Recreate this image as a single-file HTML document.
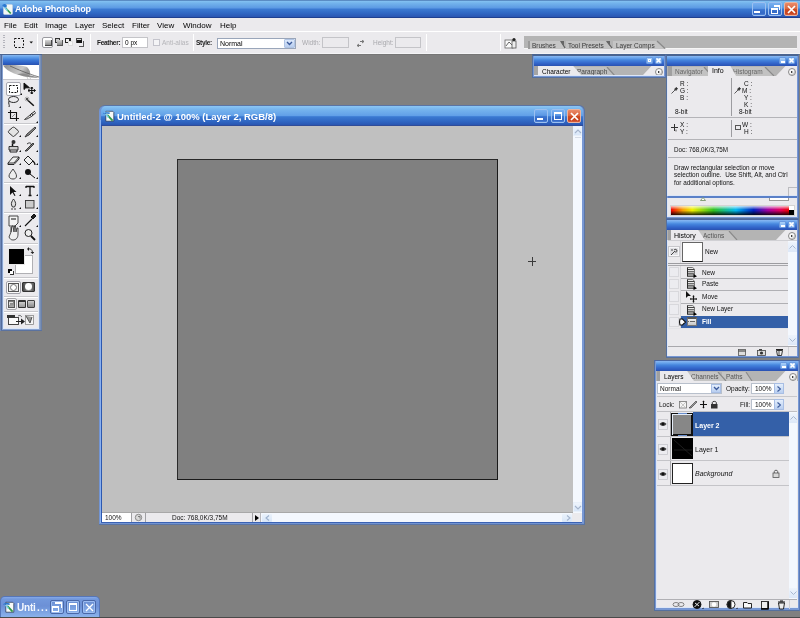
<!DOCTYPE html>
<html><head><meta charset="utf-8">
<style>
*{margin:0;padding:0;box-sizing:border-box}
html,body{width:800px;height:618px;overflow:hidden;background:#808080;font-family:"Liberation Sans",sans-serif;position:relative}
body{will-change:transform}
.a{position:absolute}
.t{position:absolute;white-space:nowrap;line-height:1;font-family:"Liberation Sans",sans-serif}
.m{font-size:8px;color:#000;top:21.5px}
.o{font-size:7px;color:#000}
.g{color:#a6a6a6}
.xb{position:absolute;width:14px;height:14px;border:1px solid #9cc0f0;border-radius:2px;background:linear-gradient(#78b0f0,#5c98e4 45%,#3a74d0 55%,#3468c4 85%,#4a80d8)}
.xc{background:linear-gradient(#ea8a68,#dc6a44 45%,#cc4a22 55%,#c84420 85%,#d86040);border-color:#eab4a0}
.inp{position:absolute;background:#fff;border:1px solid #a9b3c2}
.sep{position:absolute;width:1px;background:#b8b8bc;border-right:1px solid #fff}
</style></head><body>

<!-- ============ APP TITLE BAR ============ -->
<div class="a" style="left:0;top:0;width:800px;height:18px;background:linear-gradient(#5a8cc4 0px,#5a8cc4 1px,#84c2f2 1px,#74b4ec 3px,#5e9ce4 7.5px,#4c8adc 8.5px,#3a78d0 9.5px,#3068c4 13px,#2a58b4 16.5px,#1e4090 17px,#1e4090 18px)"></div>
<svg class="a" style="left:2px;top:3px" width="11" height="12" viewBox="0 0 11 12">
<rect x="1.5" y="1.5" width="9" height="10" rx="1" fill="#f4f8f4" stroke="#c8d4e0" stroke-width=".6"/>
<path d="M3.5 5 L8.8 10.5" stroke="#2f9a48" stroke-width="1.8"/>
<path d="M2 4 L5.5 7.5" stroke="#7fd0f0" stroke-width="1.4"/>
<path d="M0.3 2.5 C1 0.8 3.5 0.5 4.8 2 L4.6 4.5 C3 4.5 1 4 0.3 2.5z" fill="#2a78d0"/>
</svg>
<div class="t" style="left:15px;top:5px;font-size:9px;font-weight:bold;color:#fff;letter-spacing:-0.1px">Adobe Photoshop</div>
<div class="xb" style="left:752px;top:2px"><div class="a" style="left:1px;top:8px;width:6px;height:2px;background:#fff"></div></div>
<div class="xb" style="left:768px;top:2px"><div class="a" style="left:5px;top:2px;width:6px;height:5px;border:1px solid #fff;border-top-width:2px;border-left:0;border-bottom:0"></div><div class="a" style="left:2px;top:5px;width:7px;height:6px;border:1px solid #fff;border-top-width:2px"></div></div>
<div class="xb xc" style="left:784px;top:2px"><svg class="a" style="left:2px;top:2px" width="9" height="9"><path d="M1 1L8 8M8 1L1 8" stroke="#fff" stroke-width="1.7"/></svg></div>

<!-- ============ MENU BAR ============ -->
<div class="a" style="left:0;top:18px;width:800px;height:13px;background:#ebeaed"></div>
<div class="t m" style="left:4px">File</div>
<div class="t m" style="left:24px">Edit</div>
<div class="t m" style="left:45px">Image</div>
<div class="t m" style="left:75px">Layer</div>
<div class="t m" style="left:102px">Select</div>
<div class="t m" style="left:132px">Filter</div>
<div class="t m" style="left:157px">View</div>
<div class="t m" style="left:183px">Window</div>
<div class="t m" style="left:220px">Help</div>
<div class="a" style="left:0;top:32px;width:800px;height:1px;background:#d4d2d8"></div>
<div class="a" style="left:0;top:31px;width:800px;height:1px;background:#fff"></div>

<!-- ============ OPTIONS BAR ============ -->
<div class="a" style="left:0;top:32px;width:800px;height:22px;background:#ebeaed"></div>
<div class="a" style="left:0;top:53px;width:800px;height:1px;background:#f4f4f6"></div>
<div class="a" style="left:0;top:54px;width:800px;height:1px;background:#767676"></div>
<!-- grip -->
<div class="a" style="left:3px;top:35px;width:2px;height:15px;background:repeating-linear-gradient(#b4b4bc 0 1px,transparent 1px 2.5px)"></div>
<!-- marquee icon -->
<svg class="a" style="left:13px;top:37px" width="12" height="12"><rect x="1.5" y="1.5" width="9" height="9" fill="none" stroke="#111" stroke-width="1" stroke-dasharray="2 1.5"/></svg>
<svg class="a" style="left:29px;top:41px" width="5" height="3"><path d="M0.5 0.5H4L2.2 2.5z" fill="#111"/></svg>
<div class="sep" style="left:37px;top:34px;height:17px"></div>
<!-- selection mode buttons -->
<div class="a" style="left:42px;top:37px;width:11px;height:11px;background:#fff;border:1px solid #9a9aa0;border-radius:2px"></div>
<div class="a" style="left:45px;top:40px;width:7px;height:6px;background:linear-gradient(#d8d8d8,#8c8c8c);border-right:1px solid #444;border-bottom:1px solid #444"></div>
<div class="a" style="left:55px;top:38px;width:5px;height:5px;border:1px solid #333;background:#ccc"></div>
<div class="a" style="left:57px;top:40px;width:6px;height:6px;background:linear-gradient(#d0d0d0,#8a8a8a);border-right:1px solid #555;border-bottom:1px solid #555"></div>
<div class="a" style="left:65px;top:38px;width:6px;height:5px;border:1px solid #222;border-right-width:2px;background:#eee"></div>
<div class="a" style="left:68px;top:41px;width:5px;height:5px;background:#f6f6f6;border:1px solid #ddd"></div>
<div class="a" style="left:76px;top:38px;width:6px;height:5px;border:1px solid #444;background:#ddd"></div>
<div class="a" style="left:77px;top:40px;width:5px;height:3px;background:#111"></div>
<div class="a" style="left:79px;top:41px;width:5px;height:6px;border:1px solid #555;border-left:0;border-top:0"></div>
<div class="sep" style="left:90px;top:34px;height:17px"></div>
<div class="t o" style="left:97px;top:40px;font-size:6.5px;font-weight:bold;color:#222;letter-spacing:-0.3px">Feather:</div>
<div class="inp" style="left:122px;top:37px;width:26px;height:11px;border-color:#c4c4c8"></div>
<div class="t o" style="left:125px;top:40px;font-size:6.5px">0 px</div>
<div class="a" style="left:153px;top:39px;width:7px;height:7px;border:1px solid #c4c4cc;background:#f4f4f6"></div>
<div class="t o g" style="left:162px;top:40px;font-size:6.5px;color:#b4b4b8">Anti-alias</div>
<div class="sep" style="left:193px;top:34px;height:17px"></div>
<div class="t o" style="left:196px;top:40px;font-size:6.5px;font-weight:bold;color:#222;letter-spacing:-0.3px">Style:</div>
<div class="inp" style="left:217px;top:38px;width:79px;height:11px;border-color:#9aa6ba"></div>
<div class="t o" style="left:220px;top:40px">Normal</div>
<div class="a" style="left:284px;top:39px;width:11px;height:9px;background:linear-gradient(#dce8fa,#b8cdee);border:1px solid #b0c4e4;border-radius:1px"></div>
<svg class="a" style="left:286px;top:41px" width="7" height="5"><path d="M1 1L3.5 3.5L6 1" stroke="#3b5a9a" stroke-width="1.4" fill="none"/></svg>
<div class="t o g" style="left:302px;top:40px;font-size:6.5px;color:#a8a8ac">Width:</div>
<div class="inp" style="left:322px;top:37px;width:27px;height:11px;background:#ebeaed;border-color:#c4c4c8"></div>
<svg class="a" style="left:356px;top:40px" width="9" height="7"><path d="M4 1.5H8M6 0L8 1.5L6 3M5 5.5H1M3 4L1 5.5L3 7" stroke="#777" stroke-width="1" fill="none"/></svg>
<div class="t o g" style="left:373px;top:40px;font-size:6.5px;color:#a8a8ac">Height:</div>
<div class="inp" style="left:395px;top:37px;width:26px;height:11px;background:#ebeaed;border-color:#c4c4c8"></div>
<div class="sep" style="left:426px;top:34px;height:17px"></div>
<div class="sep" style="left:500px;top:34px;height:17px"></div>
<!-- palette well icon -->
<svg class="a" style="left:504px;top:37px" width="14" height="12"><rect x="1" y="3" width="8" height="8" fill="#fafafa" stroke="#666" stroke-width=".8"/><path d="M2 9L5 5L8 8" stroke="#444" fill="none" stroke-width=".8"/><rect x="8" y="4" width="4" height="7" fill="#eee" stroke="#555" stroke-width=".8"/><circle cx="10" cy="2.5" r="1.6" fill="#222"/></svg>
<!-- palette well -->
<div class="a" style="left:524px;top:36px;width:273px;height:13px;background:#b4b4b4;border-bottom:1px solid #f6f6f6"></div>
<svg class="a" style="left:524px;top:36px" width="150" height="13" viewBox="0 0 150 13">
<rect x="4" y="5" width="2" height="8" fill="#9a9a9a"/>
<path d="M89 5H133L142 13H89z" fill="#c4c4c4"/><path d="M133 5L141 12.5" stroke="#8a8a8a" stroke-width="1.3"/>
<path d="M42 5H82L89 13H42z" fill="#c2c2c2"/><path d="M83 5.5L88 12" stroke="#5a5a5a" stroke-width="1.2"/><path d="M82 5H86V10z" fill="#666"/>
<path d="M6 5H36L42 13H6z" fill="#c6c6c6"/><path d="M37 5.5L41 12" stroke="#5a5a5a" stroke-width="1.2"/><path d="M36 5H40V10z" fill="#666"/>
</svg>
<div class="t" style="left:532px;top:43px;font-size:6.5px;color:#3a3a3a">Brushes</div>
<div class="t" style="left:568px;top:43px;font-size:6.5px;color:#3a3a3a">Tool Presets</div>
<div class="t" style="left:616px;top:43px;font-size:6.5px;color:#3a3a3a">Layer Comps</div>

<!-- ============ TOOLBOX ============ -->
<div class="a" style="left:0;top:54px;width:42px;height:277px;background:linear-gradient(90deg,#6f88b8 0 1px,#526c9c 1px 2px,#88a2d0 2px 39px,#8aa0c8 39px 40px,#7890b8 40px 41px,#6a80a8 41px 42px)"></div>
<div class="a" style="left:0;top:54px;width:42px;height:1px;background:#4a6490"></div>
<div class="a" style="left:1px;top:330px;width:41px;height:1px;background:#5a72a0"></div>
<div class="a" style="left:3px;top:65px;width:36px;height:264px;background:#dde8f8"></div>
<div class="a" style="left:3px;top:55px;width:36px;height:10px;background:linear-gradient(#8ab8f0 0px,#62a0ea 2px,#3c7ad8 5px,#2d60c4 8px,#2a52b0 10px)"></div>
<div class="a" style="left:4px;top:65px;width:34px;height:263px;background:#ebeaed"></div>
<div class="a" style="left:3px;top:65px;width:36px;height:15px;background:#fff;border-bottom:1px solid #c8c8cc"></div>
<svg class="a" style="left:3px;top:65px" width="36" height="15" viewBox="0 0 36 15">
<defs><linearGradient id="fth" x1="0" y1="0" x2="1" y2=".3"><stop offset="0" stop-color="#8a8a8a"/><stop offset=".45" stop-color="#b4b4b4"/><stop offset=".75" stop-color="#c8c8c8"/><stop offset="1" stop-color="#9a9a9a"/></linearGradient></defs>
<path d="M0 .5 C6 -.3 18 0 24 2 C26 4 27.5 7 27 9.5 C22 11 16 10.5 11 8.5 C6 6.5 2 3.5 0 .5z" fill="url(#fth)"/>
<path d="M14 9 C19 11.5 25 12.5 36 12.8 C30 11 25 10 20 8.5z" fill="#8c8c8c"/>
<path d="M24 3 C26 5 28 8 27 10 L25 9z" fill="#9c9c9c"/>
<path d="M7 1 C15 4.5 24 8.5 36 12" stroke="#5a5a5a" stroke-width=".8" fill="none"/>
<path d="M24 12 L25 14 M27 12.5 L27.5 14" stroke="#aaa" stroke-width=".6"/>
</svg>
<!-- separators -->
<div class="a" style="left:4px;top:123px;width:34px;height:1px;background:#c8c8cc;border-bottom:1px solid #fff;height:2px"></div>
<div class="a" style="left:4px;top:182px;width:34px;height:2px;background:#c8c8cc;border-bottom:1px solid #fff"></div>
<div class="a" style="left:4px;top:212px;width:34px;height:2px;background:#c8c8cc;border-bottom:1px solid #fff"></div>
<div class="a" style="left:4px;top:243px;width:34px;height:2px;background:#c8c8cc;border-bottom:1px solid #fff"></div>
<div class="a" style="left:4px;top:277px;width:34px;height:2px;background:#c8c8cc;border-bottom:1px solid #fff"></div>
<div class="a" style="left:4px;top:296px;width:34px;height:2px;background:#c8c8cc;border-bottom:1px solid #fff"></div>
<div class="a" style="left:4px;top:311px;width:34px;height:2px;background:#c8c8cc;border-bottom:1px solid #fff"></div>

<svg class="a" style="left:3px;top:80px" width="36" height="250" viewBox="0 0 36 250">
<g fill="none" stroke="#111" stroke-width="1">
<!-- marquee selected button -->
<rect x="3.5" y="2.5" width="14" height="13" rx="1.5" fill="#fff" stroke="#a8a8b0"/>
<rect x="6.5" y="5.5" width="8" height="7" stroke-dasharray="2 1.2"/>
<!-- move -->
<path d="M21 3 L21 9.5 L22.8 7.8 L26.5 7.8z" fill="#111"/>
<path d="M25.5 10.5H32M28.75 7.5V13.5" stroke-width="1"/>
<path d="M25 10.5l1.2-1.1v2.2zM32.5 10.5l-1.2-1.1v2.2zM28.75 7l-1.1 1.2h2.2zM28.75 14l-1.1-1.2h2.2z" fill="#111"/>
<!-- lasso -->
<ellipse cx="10.5" cy="19.5" rx="5" ry="3" stroke-width=".9"/>
<path d="M6 21 C5 24 7 25 6 27" stroke-width=".9"/>
<!-- wand -->
<path d="M24.5 20L30.8 25.8" stroke-width="1.5"/>
<path d="M24 16.5V21.5M21.5 19H26.5M22.2 17.2L25.8 20.8M25.8 17.2L22.2 20.8" stroke="#777" stroke-width=".6"/>
<circle cx="24" cy="19" r="1" fill="#333" stroke="none"/>
<!-- crop -->
<path d="M7.5 30V38.5H16M5 32.5H13.5V41" stroke-width="1.1"/><path d="M9 37L12 34" stroke="#666" stroke-width=".7"/>
<!-- slice -->
<path d="M21.5 39.5 L27 35 L28.5 36.5 L24 39z" fill="#ddd" stroke="#222" stroke-width=".8"/>
<path d="M27 35 L32 31 M28.5 36.5 L33 32.5" stroke="#222" stroke-width="1"/>
<path d="M28 33L30 35" stroke="#222" stroke-width=".8"/>
<!-- patch / healing -->
<path d="M5.5 52.5 Q5 51.5 6 50.5 L9.5 47.5 Q10.5 46.8 11.5 47.5 L15 50.5 Q16 51.5 15 52.5 L11.5 56 Q10.5 57 9.5 56z" fill="#e4e4e4" stroke="#333" stroke-width="1"/>
<!-- brush -->
<path d="M22 57 L24 54 L32 47 L33 48 L26 55z" fill="#888" stroke="#222" stroke-width=".8"/>
<!-- stamp -->
<circle cx="10.5" cy="62" r="2" fill="#333" stroke="none"/>
<path d="M9.5 63.5V66" stroke-width="1.5"/>
<path d="M6 66.5H15V70H6z" fill="#ccc" stroke="#222" stroke-width=".9"/>
<path d="M7 70V72H14V70" stroke-width=".9"/>
<!-- history brush -->
<path d="M22 71 L30 63 L31 64 L24 71z" fill="#777" stroke="#222" stroke-width=".8"/>
<path d="M24 64 C26 62 29 63 28 65" stroke-width=".8"/>
<!-- eraser -->
<path d="M5 83 L10 77 L16 77 L11 83z" fill="#eee" stroke="#222" stroke-width=".9"/>
<path d="M5 83V84.5H11L16 79V77" stroke-width=".9"/>
<!-- bucket -->
<path d="M21 80 L25 76 L30 81 L26 85z" fill="#eee" stroke="#222" stroke-width="1"/>
<path d="M30 81 Q32 83 32 85" stroke-width="1.2"/>
<!-- blur drop -->
<path d="M10 89 C8 92 6 94 6 96 C6 98 8 99 10 99 C12 99 13.5 98 13.5 96 C13.5 94 12 92 10 89z" fill="#eee" stroke="#333" stroke-width=".9"/>
<!-- dodge -->
<circle cx="25" cy="92" r="3" fill="#111" stroke="none"/>
<path d="M27 94L32 98" stroke-width="1"/>
<!-- path selection arrow -->
<path d="M7 106 L7 115 L9.5 112.5 L11.5 116 L12.5 115.5 L10.5 112 L13.5 112z" fill="#111" stroke="none"/>
<!-- T -->
<path d="M23 106.5H31M27 106.5V115.5M25.5 115.5H28.5M23 106V108M31 106V108" stroke-width="1.3"/>
<!-- pen -->
<path d="M10.5 119 C9 121 8 123 8.5 125 L9.5 127 H11.5 L12.5 125 C13 123 12 121 10.5 119z" fill="#ddd" stroke="#222" stroke-width=".9"/>
<path d="M9 128V130M12 128V130" stroke-width=".8"/>
<!-- rect shape -->
<rect x="22.5" y="120.5" width="8.5" height="7.5" fill="#ccc" stroke="#333" stroke-width=".9"/>
<!-- notes -->
<path d="M6 136H15V143L12 146H6z" fill="#f4f4f4" stroke="#333" stroke-width=".9"/>
<path d="M8 139H13" stroke-width="1"/>
<!-- eyedropper -->
<path d="M22 146 L29 139" stroke-width="1.1"/>
<path d="M28 137 L31 134 L33 136 L30 139z" fill="#222"/>
<!-- hand -->
<path d="M6 157 L8 152 L8 147 M8 152 L9 146 L10 146 L11 152 L11.5 146 L12.5 146 L13 152 L14 148 L15 148 L15 154 C15 158 13 160 10 160 C8 160 7 159 6 157" fill="#f0f0f0" stroke="#222" stroke-width=".8"/>
<!-- zoom -->
<circle cx="25.5" cy="153" r="3.5" fill="#eee" stroke="#222" stroke-width="1"/>
<path d="M28 156L32 160" stroke-width="1.8"/>
</g>
<!-- small triangles -->
<g fill="#111">
<path d="M17 15h2v-2z"/><path d="M16 28h2v-2z"/><path d="M33 43h2v-2z"/>
<path d="M16 57h2v-2z"/><path d="M33 57h2v-2z"/><path d="M16 72h2v-2z"/><path d="M33 72h2v-2z"/>
<path d="M16 85h2v-2z"/><path d="M33 85h2v-2z"/><path d="M16 99h2v-2z"/><path d="M33 99h2v-2z"/>
<path d="M16 116h2v-2z"/><path d="M33 116h2v-2z"/><path d="M16 129h2v-2z"/><path d="M33 129h2v-2z"/>
<path d="M16 147h2v-2z"/><path d="M33 147h2v-2z"/>
</g>
</svg>
<!-- color swatches -->
<div class="a" style="left:15px;top:255px;width:18px;height:19px;background:#fff;border:1px solid #b0b0b4"></div>
<div class="a" style="left:8px;top:248px;width:17px;height:17px;background:#000;border:1px solid #e8e8e8"></div>
<div class="a" style="left:8px;top:269px;width:4px;height:4px;background:#000"></div>
<div class="a" style="left:10px;top:271px;width:4px;height:4px;background:#fff;border:1px solid #333;border-top:0;border-left:0"></div>
<svg class="a" style="left:27px;top:247px" width="7" height="7"><path d="M1 2Q5 1 5.5 5.5" stroke="#222" fill="none" stroke-width=".9"/><path d="M0 2l2-2v4zM5.5 7l-2-2h4z" fill="#222"/></svg>
<!-- quick mask -->
<div class="a" style="left:6px;top:281px;width:15px;height:13px;background:#fafafa;border:1px solid #a0a0a8;border-radius:2px"></div>
<div class="a" style="left:8px;top:283px;width:11px;height:9px;background:#f0f0f0;border:1px solid #555"></div>
<div class="a" style="left:10px;top:284px;width:7px;height:7px;background:#fff;border:1px solid #777;border-radius:50%"></div>
<div class="a" style="left:22px;top:282px;width:13px;height:10px;background:linear-gradient(90deg,#444,#999 50%,#555);border:1px solid #333;border-radius:1px"></div>
<div class="a" style="left:25px;top:283px;width:7px;height:7px;background:#fff;border-radius:50%"></div>
<!-- screen modes -->
<div class="a" style="left:6px;top:298px;width:11px;height:12px;border:1px solid #a8a8ac;background:#f4f4f6;border-radius:2px"></div>
<div class="a" style="left:8px;top:300px;width:7px;height:8px;background:linear-gradient(#777,#aaa);border:1px solid #555"></div>
<div class="a" style="left:9px;top:302px;width:4px;height:3px;border-left:1px solid #ddd;border-top:1px solid #ddd"></div>
<div class="a" style="left:18px;top:300px;width:8px;height:8px;background:linear-gradient(#ccc,#999);border:1px solid #333;border-top-width:2px;border-radius:1px"></div>
<div class="a" style="left:27px;top:300px;width:8px;height:8px;background:linear-gradient(#ccc,#8a8a8a);border:1px solid #444;border-radius:1px"></div>
<!-- jump to -->
<svg class="a" style="left:6px;top:313px" width="30" height="13" viewBox="0 0 30 13">
<rect x="2.5" y="4.5" width="10" height="7" fill="#fafafa" stroke="#333" stroke-width=".9"/>
<rect x="1" y="2" width="8" height="3" fill="#333"/>
<path d="M10 8H15V5.5L19 8.5L15 11.5V9H10z" fill="#222"/>
<path d="M12 3Q14 1 16 4" stroke="#555" fill="none" stroke-width=".8"/>
<rect x="19.5" y="2.5" width="8" height="9" fill="#f4f4f4" stroke="#888" stroke-width=".8"/>
<path d="M20 3 L24 10 L26 4" stroke="#555" fill="#999" stroke-width="1"/>
</svg>

<!-- ============ DOCUMENT WINDOW ============ -->
<div class="a" style="left:99px;top:105px;width:486px;height:420px;background:#5a74a4;border-radius:6px 6px 0 0"></div>
<div class="a" style="left:99px;top:106px;width:485px;height:418px;background:#7294d2;border-radius:5px 5px 0 0"></div>
<div class="a" style="left:100px;top:120px;width:1px;height:403px;background:#8ab0ee"></div>
<div class="a" style="left:101px;top:106px;width:482px;height:20px;background:linear-gradient(#8cc6f4 0px,#78b6ee 3px,#62a0e8 9.5px,#4a8ade 10px,#3a78d0 11px,#3068c4 15px,#2a58b4 18.5px,#304c98 19px,#304c98 20px);border-radius:5px 5px 0 0"></div>
<div class="a" style="left:101px;top:126px;width:1px;height:397px;background:#2c58b0"></div>
<div class="a" style="left:101px;top:522px;width:482px;height:1px;background:#3a62b4"></div>
<div class="a" style="left:582px;top:126px;width:2px;height:397px;background:#7898d4"></div>
<svg class="a" style="left:103px;top:110px" width="12" height="12" viewBox="0 0 12 12">
<path d="M2.8 1.3H9.8L10.8 2.3V11.2H2.8z" fill="#f8faf8" stroke="#1a2a4a" stroke-width=".7"/>
<path d="M4.2 4.8 L9.6 10.6" stroke="#2f9a48" stroke-width="1.8"/>
<path d="M2.5 4 L5.5 7.5" stroke="#7fd0f0" stroke-width="1.4"/>
<path d="M0 3.2 C1.5 1.8 4 1.6 6.8 2.4 L6.6 4 C4 3.8 2 4 0 3.6z" fill="#2a78d0"/>
<path d="M1 2.6 C2.5 2 4.5 1.9 6.5 2.3" stroke="#9cd8f8" stroke-width=".6" fill="none"/>
</svg>
<div class="t" style="left:117px;top:111.5px;font-size:9.5px;font-weight:bold;color:#fff;letter-spacing:0px">Untitled-2 @ 100% (Layer 2, RGB/8)</div>
<div class="xb" style="left:534px;top:109px"><div class="a" style="left:2px;top:8px;width:6px;height:2px;background:#fff"></div></div>
<div class="xb" style="left:551px;top:109px"><div class="a" style="left:2px;top:2px;width:8px;height:8px;border:1px solid #fff;border-top-width:2px"></div></div>
<div class="xb xc" style="left:567px;top:109px"><svg class="a" style="left:2px;top:2px" width="9" height="9"><path d="M1 1L8 8M8 1L1 8" stroke="#fff" stroke-width="1.7"/></svg></div>

<!-- canvas area -->
<div class="a" style="left:102px;top:126px;width:471px;height:387px;background:#c0c0c0"></div>
<div class="a" style="left:102px;top:512px;width:471px;height:1px;background:#a8a8a8"></div>
<div class="a" style="left:177px;top:159px;width:321px;height:321px;background:#808080;border:1px solid #2a2a2a;border-right-color:#1a1a1a;border-bottom-color:#1a1a1a"></div>
<div class="a" style="left:528px;top:261px;width:8px;height:1px;background:#3a3a3a"></div>
<div class="a" style="left:532px;top:257px;width:1px;height:9px;background:#3a3a3a"></div>
<!-- v scrollbar -->
<div class="a" style="left:573px;top:126px;width:9px;height:387px;background:#f4f8fe"></div>
<div class="a" style="left:573px;top:126px;width:9px;height:10px;background:linear-gradient(#eef4fc,#d8e6f8);border:1px solid #e8f0fa"></div>
<svg class="a" style="left:574px;top:129px" width="8" height="5"><path d="M1 4L4 1L7 4" stroke="#a4b4cc" fill="none" stroke-width="1.1"/></svg>
<div class="a" style="left:575px;top:137px;width:6px;height:1px;background:#d6dce6"></div>
<div class="a" style="left:573px;top:502px;width:9px;height:10px;background:linear-gradient(#eef4fc,#d8e6f8);border:1px solid #e8f0fa"></div>
<svg class="a" style="left:574px;top:505px" width="8" height="5"><path d="M1 1L4 4L7 1" stroke="#a4b4cc" fill="none" stroke-width="1.1"/></svg>
<!-- status bar -->
<div class="a" style="left:102px;top:513px;width:480px;height:9px;background:#ebeaed"></div>
<div class="a" style="left:102px;top:513px;width:29px;height:9px;background:#fff"></div>
<div class="t" style="left:105px;top:515px;font-size:6.5px;color:#111">100%</div>
<div class="a" style="left:131px;top:513px;width:1px;height:9px;background:#a0a0a4"></div>
<svg class="a" style="left:134px;top:513px" width="10" height="9"><circle cx="4.5" cy="4.5" r="3.2" fill="#d8d8d8" stroke="#888" stroke-width="1"/><path d="M4 3.5h2v2" stroke="#666" fill="none" stroke-width=".8"/></svg>
<div class="a" style="left:145px;top:513px;width:1px;height:9px;background:#a0a0a4"></div>
<div class="t" style="left:172px;top:515px;font-size:6.5px;color:#111">Doc: 768,0K/3,75M</div>
<div class="a" style="left:252px;top:513px;width:1px;height:9px;background:#a0a0a4"></div>
<svg class="a" style="left:254px;top:514px" width="6" height="8"><path d="M1 1L5 4L1 7z" fill="#000"/></svg>
<div class="a" style="left:260px;top:513px;width:1px;height:9px;background:#b8b8bc"></div>
<div class="a" style="left:261px;top:513px;width:311px;height:9px;background:#f4f8fe"></div>
<div class="a" style="left:262px;top:514px;width:10px;height:8px;background:linear-gradient(#eaf2fc,#d8e6f8);border-radius:1px"></div>
<svg class="a" style="left:265px;top:515px" width="5" height="6"><path d="M4 0.5L1 3L4 5.5" stroke="#9cb0cc" fill="none" stroke-width="1.1"/></svg>
<div class="a" style="left:562px;top:514px;width:10px;height:8px;background:linear-gradient(#eaf2fc,#d8e6f8);border-radius:1px"></div>
<svg class="a" style="left:566px;top:515px" width="5" height="6"><path d="M1 0.5L4 3L1 5.5" stroke="#a4b4cc" fill="none" stroke-width="1.1"/></svg>
<div class="a" style="left:572px;top:513px;width:10px;height:9px;background:#ebeaed"></div>

<!-- ============ PANELS common ============ -->
<style>
.pb{position:absolute;background:#7898d4;border:1px solid #55709e;border-right-color:#5a7ab8;border-top-color:#4a66a0}
.ptl{position:absolute;height:10px;background:linear-gradient(#8ab8f2 0px,#68a4ec 2px,#4686de 4px,#3468cc 7px,#2c58bc 9px,#2a52b0 10px)}
.pbt{position:absolute;width:7px;height:7px;border:1px solid #6a9ae0;background:linear-gradient(#a8d0f8,#78aaee);border-radius:1px}
.tr{position:absolute;height:10px;background:#b4b4b4}
.tab{position:absolute;height:9px;top:1px;background:#c4c4c4;clip-path:polygon(0 0,80% 0,100% 100%,0 100%)}
.tab.ac{background:#ebeaed;top:0;height:10px}
.tt{position:absolute;white-space:nowrap;line-height:1;font-size:6.5px;color:#444;font-family:"Liberation Sans",sans-serif}
.tt.ac{color:#000}
.pc{position:absolute;background:#ebeaed;box-shadow:inset 1px 0 0 #dde6f6,inset 0 -1px 0 #dde6f6}
.pm{position:absolute;width:8px;height:8px;border-radius:50%;background:#f8f8f8;border:1px solid #8a8a8a;box-shadow:inset -1px -1px 0 #ccc}
.pm::after{content:"";position:absolute;left:2px;top:1.5px;border-left:2.5px solid #000;border-top:1.5px solid transparent;border-bottom:1.5px solid transparent}
.s6{position:absolute;white-space:nowrap;line-height:1;font-size:6.5px;color:#111;font-family:"Liberation Sans",sans-serif}
</style>

<!-- ===== Character panel ===== -->
<div class="pb" style="left:532px;top:54px;width:134px;height:24px;border-top:2px solid #4a6490"></div>
<div class="ptl" style="left:534px;top:56px;width:130px"></div>
<div class="pbt" style="left:646px;top:57px"><div class="a" style="left:1px;top:1px;width:3px;height:3px;border:1px solid #fff;border-top-width:1px"></div></div>
<div class="pbt" style="left:655px;top:57px"><svg class="a" style="left:0;top:0" width="5" height="5"><path d="M.5 .5L4.5 4.5M4.5 .5L.5 4.5" stroke="#fff" stroke-width="1.5"/></svg></div>
<div class="tr" style="left:534px;top:66px;width:130px;height:9px"></div>
<div class="a" style="left:534px;top:66px;width:4px;height:9px;background:#a4a4a4"></div>
<div class="tab" style="top:67px;left:573px;width:42px;background:#c0c0c0"></div>
<div class="tt" style="left:577px;top:69px">Paragraph</div>
<svg class="a" style="left:606px;top:67px" width="10" height="9"><path d="M1 0L9 9" stroke="#8a8a8a" stroke-width="1.2"/></svg>
<div class="tab ac" style="left:538px;top:66px;width:44px"></div>
<div class="tt ac" style="left:542px;top:69px">Character</div>
<div class="a" style="left:643px;top:66px;width:21px;height:9px;background:#ebeaed;clip-path:polygon(40% 0,100% 0,100% 100%,0 100%)"></div>
<div class="pm" style="left:655px;top:68px"></div>
<div class="a" style="left:534px;top:75px;width:130px;height:1px;background:#dde6f6"></div>

<!-- ===== Info panel ===== -->
<div class="pb" style="left:666px;top:54px;width:133px;height:165px;border-top:2px solid #4a6490"></div>
<div class="ptl" style="left:667px;top:56px;width:130px"></div>
<div class="pbt" style="left:779px;top:57px"><div class="a" style="left:1px;top:3px;width:4px;height:2px;background:#fff"></div></div>
<div class="pbt" style="left:788px;top:57px"><svg class="a" style="left:0;top:0" width="5" height="5"><path d="M.5 .5L4.5 4.5M4.5 .5L.5 4.5" stroke="#fff" stroke-width="1.5"/></svg></div>
<div class="tr" style="left:667px;top:66px;width:130px"></div>
<div class="a" style="left:668px;top:66px;width:4px;height:10px;background:#a0a0a0"></div>
<div class="tab" style="top:67px;left:672px;width:40px;background:#c2c2c2"></div>
<div class="tt" style="left:675px;top:69px;color:#666">Navigator</div>
<svg class="a" style="left:703px;top:67px" width="10" height="9"><path d="M1 0L9 9" stroke="#8a8a8a" stroke-width="1.2"/></svg>
<div class="tab" style="top:67px;left:728px;width:46px;background:#c2c2c2"></div>
<div class="tt" style="left:733px;top:69px;color:#666">Histogram</div>
<svg class="a" style="left:764px;top:67px" width="11" height="9"><path d="M1 0L10 9" stroke="#8a8a8a" stroke-width="1.2"/></svg>
<div class="tab ac" style="left:708px;top:66px;width:28px"></div>
<div class="tt ac" style="left:712px;top:67px;font-size:7px">Info</div>
<div class="a" style="left:776px;top:66px;width:21px;height:10px;background:#ebeaed;clip-path:polygon(45% 0,100% 0,100% 100%,0 100%)"></div>
<div class="pm" style="left:788px;top:68px"></div>
<div class="pc" style="left:667px;top:76px;width:130px;height:120px"></div>
<!-- info content -->
<div class="s6" style="left:680px;top:81px">R :</div>
<div class="s6" style="left:680px;top:88px">G :</div>
<div class="s6" style="left:680px;top:95px">B :</div>
<div class="s6" style="left:675px;top:109px">8-bit</div>
<svg class="a" style="left:671px;top:87px" width="7" height="7"><path d="M.5 6.5L4 3M3.5 2L5.5 0.5L6.5 1.5L5 3.5z" stroke="#333" fill="#333" stroke-width=".8"/></svg>
<div class="a" style="left:731px;top:78px;width:1px;height:38px;background:#9c9ca0"></div>
<div class="s6" style="left:744px;top:81px">C :</div>
<div class="s6" style="left:742px;top:88px">M :</div>
<div class="s6" style="left:744px;top:95px">Y :</div>
<div class="s6" style="left:744px;top:102px">K :</div>
<div class="s6" style="left:739px;top:109px">8-bit</div>
<svg class="a" style="left:734px;top:87px" width="7" height="7"><path d="M.5 6.5L4 3M3.5 2L5.5 0.5L6.5 1.5L5 3.5z" stroke="#333" fill="#333" stroke-width=".8"/></svg>
<div class="a" style="left:668px;top:117px;width:129px;height:1px;background:#b4b4b8"></div>
<div class="s6" style="left:680px;top:122px">X :</div>
<div class="s6" style="left:680px;top:129px">Y :</div>
<svg class="a" style="left:671px;top:124px" width="8" height="8"><path d="M3.5 0V7M0 3.5H7" stroke="#333" stroke-width="1"/><path d="M5 5.5V7.5" stroke="#333" stroke-width=".8"/></svg>
<div class="a" style="left:731px;top:120px;width:1px;height:17px;background:#9c9ca0"></div>
<div class="s6" style="left:742px;top:122px">W :</div>
<div class="s6" style="left:744px;top:129px">H :</div>
<div class="a" style="left:735px;top:125px;width:6px;height:5px;border:1px solid #555"></div>
<div class="a" style="left:668px;top:139px;width:129px;height:1px;background:#b4b4b8"></div>
<div class="s6" style="left:674px;top:147px;font-size:6.3px">Doc: 768,0K/3,75M</div>
<div class="a" style="left:668px;top:157px;width:129px;height:1px;background:#b4b4b8"></div>
<div class="s6" style="left:674px;top:165px;font-size:6.4px">Draw rectangular selection or move</div>
<div class="s6" style="left:674px;top:172px;font-size:6.4px">selection outline.&nbsp; Use Shift, Alt, and Ctrl</div>
<div class="s6" style="left:674px;top:180px;font-size:6.4px">for additional options.</div>
<div class="a" style="left:788px;top:187px;width:9px;height:9px;border:1px solid #bcbcc0;border-right:0;border-bottom:0"></div>
<div class="a" style="left:668px;top:196px;width:129px;height:2px;background:#5a80c8"></div>
<!-- color panel piece -->
<div class="pc" style="left:667px;top:198px;width:130px;height:19px"></div>
<svg class="a" style="left:700px;top:197px" width="6" height="4"><path d="M.5 3.5L3 .5L5.5 3.5z" fill="#fff" stroke="#6a8a5a" stroke-width=".8"/></svg>
<div class="a" style="left:769px;top:198px;width:20px;height:3px;background:#fff;border:1px solid #999;border-top:0"></div>
<div class="a" style="left:670px;top:205px;width:125px;height:11px;background:#d4d4d4"></div>
<div class="a" style="left:671px;top:206px;width:118px;height:9px;background:linear-gradient(rgba(255,255,255,.75) 0%,rgba(255,255,255,0) 40%,rgba(0,0,0,0) 50%,rgba(0,0,0,.85) 100%),linear-gradient(90deg,#e00 0%,#f8a000 10%,#f0f000 18%,#30c020 36%,#00b8f0 55%,#0020c0 70%,#a000a0 82%,#e00060 92%,#e00 100%)"></div>
<div class="a" style="left:789px;top:206px;width:5px;height:4px;background:#fff"></div>
<div class="a" style="left:789px;top:210px;width:5px;height:5px;background:#000"></div>

<!-- ===== History panel ===== -->
<div class="pb" style="left:666px;top:219px;width:133px;height:139px"></div>
<div class="ptl" style="left:667px;top:220px;width:130px"></div>
<div class="pbt" style="left:779px;top:221px"><div class="a" style="left:1px;top:3px;width:4px;height:2px;background:#fff"></div></div>
<div class="pbt" style="left:788px;top:221px"><svg class="a" style="left:0;top:0" width="5" height="5"><path d="M.5 .5L4.5 4.5M4.5 .5L.5 4.5" stroke="#fff" stroke-width="1.5"/></svg></div>
<div class="tr" style="left:667px;top:230px;width:130px"></div>
<div class="a" style="left:668px;top:230px;width:3px;height:10px;background:#a0a0a0"></div>
<div class="tab" style="top:231px;left:697px;width:40px;background:#c2c2c2"></div>
<div class="tt" style="left:703px;top:233px;color:#555">Actions</div>
<svg class="a" style="left:728px;top:231px" width="10" height="9"><path d="M1 0L9 9" stroke="#8a8a8a" stroke-width="1.2"/></svg>
<div class="tab ac" style="left:671px;top:230px;width:34px"></div>
<div class="tt ac" style="left:674px;top:232px;font-size:7px">History</div>
<div class="a" style="left:776px;top:230px;width:21px;height:10px;background:#ebeaed;clip-path:polygon(45% 0,100% 0,100% 100%,0 100%)"></div>
<div class="pm" style="left:788px;top:232px"></div>
<div class="pc" style="left:667px;top:240px;width:130px;height:116px"></div>
<div class="a" style="left:668px;top:240px;width:129px;height:1px;background:#d0d0d4"></div>
<!-- scrollbar -->
<div class="a" style="left:788px;top:241px;width:9px;height:105px;background:#f4f8fe"></div>
<div class="a" style="left:788px;top:242px;width:9px;height:10px;background:linear-gradient(#eef4fc,#dde8f8)"></div>
<svg class="a" style="left:789px;top:245px" width="7" height="4"><path d="M.5 3.5L3.5 .5L6.5 3.5" stroke="#a8b8d0" fill="none" stroke-width="1"/></svg>
<div class="a" style="left:788px;top:335px;width:9px;height:10px;background:linear-gradient(#eef4fc,#dde8f8)"></div>
<svg class="a" style="left:789px;top:338px" width="7" height="4"><path d="M.5 .5L3.5 3.5L6.5 .5" stroke="#a8b8d0" fill="none" stroke-width="1"/></svg>
<!-- snapshot -->
<div class="a" style="left:680px;top:241px;width:1px;height:22px;background:#d8d8dc"></div>
<div class="a" style="left:669px;top:247px;width:10px;height:9px;background:#e0e0e4;border:1px solid #f6f6f8;outline:1px solid #c8c8cc"></div>
<svg class="a" style="left:670px;top:248px" width="8" height="8"><path d="M1 7L5 3M4 2C5 1 7 1 7 3C7 4 6 4 5 4" stroke="#333" fill="none" stroke-width=".9"/><circle cx="2" cy="2" r=".8" fill="#333"/></svg>
<div class="a" style="left:682px;top:242px;width:21px;height:20px;background:#fff;border:1px solid #666;border-bottom-color:#222"></div>
<div class="s6" style="left:705px;top:249px;font-size:6.5px">New</div>
<div class="a" style="left:668px;top:263px;width:120px;height:1px;background:#9c9ca0"></div>
<div class="a" style="left:668px;top:265px;width:120px;height:1px;background:#a8a8ac"></div>
<!-- rows -->
<div class="a" style="left:669px;top:267px;width:10px;height:10px;background:#ececf0;border:1px solid #d8d8dc"></div>
<div class="a" style="left:669px;top:279px;width:10px;height:10px;background:#ececf0;border:1px solid #d8d8dc"></div>
<div class="a" style="left:669px;top:291px;width:10px;height:11px;background:#ececf0;border:1px solid #d8d8dc"></div>
<div class="a" style="left:669px;top:304px;width:10px;height:11px;background:#ececf0;border:1px solid #d8d8dc"></div>
<div class="a" style="left:669px;top:317px;width:10px;height:10px;background:#ececf0;border:1px solid #d8d8dc"></div>
<div class="a" style="left:680px;top:266px;width:1px;height:62px;background:#d8d8dc"></div>
<div class="a" style="left:681px;top:278px;width:107px;height:1px;background:#b0b0b4"></div>
<div class="a" style="left:681px;top:290px;width:107px;height:1px;background:#b0b0b4"></div>
<div class="a" style="left:681px;top:303px;width:107px;height:1px;background:#b0b0b4"></div>
<div class="a" style="left:681px;top:316px;width:107px;height:1px;background:#b0b0b4"></div>
<div class="a" style="left:668px;top:328px;width:120px;height:1px;background:#e4e4e8"></div>
<!-- doc icons -->
<svg class="a" style="left:686px;top:266px" width="12" height="62" viewBox="0 0 12 62">
<g id="hico"><path d="M1.5 1.5H6.5L8.5 3V10.5H1.5z" fill="#e8e8e8" stroke="#555" stroke-width=".8"/><path d="M2 3.5H8M2 5.7H8M2 7.9H8M2 10H8" stroke="#444" stroke-width="1.1"/><path d="M1.5 1.5V10.5" stroke="#222" stroke-width=".9"/><path d="M7.5 8L11 10.2L7.5 12z" fill="#000"/></g>
<use href="#hico" y="12"/>
<use href="#hico" y="38"/>
</svg>
<svg class="a" style="left:685px;top:291px" width="13" height="12"><path d="M1 0L1 7L3 5L6 5z" fill="#111"/><path d="M5 8H12M8.5 4.5V11.5" stroke="#111" stroke-width="1.2"/><path d="M5 8l1.2-1.1v2.2zM12 8l-1.2-1.1v2.2zM8.5 4.5l-1.1 1.2h2.2zM8.5 11.5l-1.1-1.2h2.2z" fill="#111"/></svg>
<div class="s6" style="left:702px;top:270px">New</div>
<div class="s6" style="left:702px;top:281px">Paste</div>
<div class="s6" style="left:702px;top:294px">Move</div>
<div class="s6" style="left:702px;top:306px">New Layer</div>
<!-- selected Fill -->
<div class="a" style="left:681px;top:316px;width:107px;height:12px;background:#3460a8"></div>
<svg class="a" style="left:678px;top:317px" width="9" height="10"><path d="M2 2H4.5L7.5 5L4.5 8H2Q1 5 2 2z" fill="#fff" stroke="#111" stroke-width="1.1"/></svg>
<div class="a" style="left:687px;top:317px;width:10px;height:9px;background:linear-gradient(#f0f0f0,#c8c8c8);border:1px solid #777;border-top:2px solid #555"></div>
<div class="a" style="left:690px;top:321px;width:5px;height:1px;background:#666"></div>
<div class="a" style="left:688px;top:321px;width:1px;height:1px;background:#666"></div>
<div class="t" style="left:702px;top:319px;font-size:6.5px;font-weight:bold;color:#fff">Fill</div>
<!-- footer -->
<div class="a" style="left:668px;top:346px;width:129px;height:1px;background:#a8a8ac"></div>
<div class="a" style="left:668px;top:347px;width:129px;height:9px;background:#ebeaed"></div>
<svg class="a" style="left:737px;top:348px" width="50" height="8" viewBox="0 0 50 8">
<rect x="1.5" y="1.5" width="7" height="6" fill="#ddd" stroke="#555" stroke-width=".8"/><path d="M1.5 3H8.5" stroke="#333" stroke-width="1"/>
<rect x="20.5" y="2.5" width="8" height="5" fill="#ddd" stroke="#444" stroke-width=".8"/><circle cx="24.5" cy="5" r="1.6" fill="#333"/><rect x="22" y="1" width="3" height="1.5" fill="#444"/>
<path d="M39.5 2.5H45.5L44.5 7.5H40.5z" fill="#eee" stroke="#222" stroke-width=".9"/><path d="M39 1.5H46" stroke="#222" stroke-width="1"/><path d="M42 2.5V7.5" stroke="#222" stroke-width=".8"/>
</svg>
<div class="a" style="left:788px;top:347px;width:1px;height:9px;background:#d0d0d4"></div>

<!-- ===== Layers panel ===== -->
<div class="pb" style="left:654px;top:360px;width:146px;height:251px"></div>
<div class="ptl" style="left:656px;top:361px;width:142px"></div>
<div class="pbt" style="left:780px;top:362px"><div class="a" style="left:1px;top:3px;width:4px;height:2px;background:#fff"></div></div>
<div class="pbt" style="left:789px;top:362px"><svg class="a" style="left:0;top:0" width="5" height="5"><path d="M.5 .5L4.5 4.5M4.5 .5L.5 4.5" stroke="#fff" stroke-width="1.5"/></svg></div>
<div class="tr" style="left:656px;top:371px;width:142px"></div>
<div class="a" style="left:657px;top:371px;width:3px;height:10px;background:#a0a0a0"></div>
<div class="tab" style="top:372px;left:722px;width:30px;background:#c4c4c4"></div>
<div class="tt" style="left:726px;top:374px;color:#555">Paths</div>
<svg class="a" style="left:745px;top:372px" width="8" height="9"><path d="M1 0L7 9" stroke="#8a8a8a" stroke-width="1.2"/></svg>
<div class="tab" style="top:372px;left:686px;width:40px;background:#c4c4c4"></div>
<div class="tt" style="left:691px;top:374px;color:#555">Channels</div>
<svg class="a" style="left:717px;top:372px" width="10" height="9"><path d="M1 0L9 9" stroke="#8a8a8a" stroke-width="1.2"/></svg>
<div class="tab ac" style="left:660px;top:371px;width:34px"></div>
<div class="tt ac" style="left:664px;top:374px;font-size:6.5px">Layers</div>
<div class="a" style="left:776px;top:371px;width:21px;height:10px;background:#ebeaed;clip-path:polygon(45% 0,100% 0,100% 100%,0 100%)"></div>
<div class="pm" style="left:789px;top:373px"></div>
<div class="pc" style="left:656px;top:381px;width:142px;height:227px"></div>
<!-- blend mode -->
<div class="a" style="left:657px;top:383px;width:65px;height:11px;background:#fff;border:1px solid #b8c0cc"></div>
<div class="s6" style="left:660px;top:386px;font-size:6.5px">Normal</div>
<div class="a" style="left:711px;top:384px;width:10px;height:9px;background:linear-gradient(#e4eefc,#b8cef0);border:1px solid #a8bee4"></div>
<svg class="a" style="left:713px;top:386px" width="7" height="5"><path d="M1 1L3.5 3.5L6 1" stroke="#3b5a9a" stroke-width="1.3" fill="none"/></svg>
<div class="s6" style="left:726px;top:386px">Opacity:</div>
<div class="a" style="left:751px;top:383px;width:24px;height:11px;background:#fff;border:1px solid #b8c0cc"></div>
<div class="s6" style="left:755px;top:386px">100%</div>
<div class="a" style="left:774px;top:383px;width:10px;height:11px;background:linear-gradient(#e4eefc,#b8cef0);border:1px solid #a8bee4"></div>
<svg class="a" style="left:777px;top:386px" width="4" height="6"><path d="M.5 .5L3.5 3L.5 5.5" stroke="#3b5a9a" stroke-width="1.2" fill="none"/></svg>
<div class="a" style="left:657px;top:396px;width:140px;height:1px;background:#c8c8cc"></div>
<div class="s6" style="left:659px;top:402px">Lock:</div>
<svg class="a" style="left:678px;top:400px" width="42" height="9" viewBox="0 0 42 9">
<rect x="1.5" y="1.5" width="7" height="6.5" fill="#f4f4f4" stroke="#777" stroke-width=".8"/><path d="M2 2L8 8M8 2L2 8" stroke="#bbb" stroke-width=".8"/>
<path d="M11 8L18 1L19 2L13 8z" fill="#999" stroke="#333" stroke-width=".6"/>
<path d="M25.5 1V8M22 4.5H29" stroke="#111" stroke-width="1.1"/><path d="M25.5 0.5l-1.2 1.3h2.4zM25.5 8.5l-1.2-1.3h2.4z" fill="#111"/>
<rect x="33" y="4" width="6.5" height="4.5" fill="#333"/><path d="M34.3 4V2.5C34.3 1 38.3 1 38.3 2.5V4" stroke="#333" fill="none" stroke-width="1"/>
</svg>
<div class="s6" style="left:740px;top:402px">Fill:</div>
<div class="a" style="left:751px;top:399px;width:24px;height:11px;background:#fff;border:1px solid #b8c0cc"></div>
<div class="s6" style="left:755px;top:402px">100%</div>
<div class="a" style="left:774px;top:399px;width:10px;height:11px;background:linear-gradient(#e4eefc,#b8cef0);border:1px solid #a8bee4"></div>
<svg class="a" style="left:777px;top:402px" width="4" height="6"><path d="M.5 .5L3.5 3L.5 5.5" stroke="#3b5a9a" stroke-width="1.2" fill="none"/></svg>
<div class="a" style="left:657px;top:411px;width:140px;height:1px;background:#c0c0c4"></div>
<!-- scrollbar -->
<div class="a" style="left:789px;top:412px;width:8px;height:187px;background:#f4f8fe"></div>
<div class="a" style="left:789px;top:413px;width:8px;height:10px;background:linear-gradient(#eef4fc,#dde8f8)"></div>
<svg class="a" style="left:790px;top:416px" width="7" height="4"><path d="M.5 3.5L3.5 .5L6.5 3.5" stroke="#a8b8d0" fill="none" stroke-width="1"/></svg>
<div class="a" style="left:789px;top:588px;width:8px;height:10px;background:linear-gradient(#eef4fc,#dde8f8)"></div>
<svg class="a" style="left:790px;top:591px" width="7" height="4"><path d="M.5 .5L3.5 3.5L6.5 .5" stroke="#a8b8d0" fill="none" stroke-width="1"/></svg>
<!-- rows -->
<div class="a" style="left:693px;top:412px;width:96px;height:24px;background:#3460a8"></div>
<div class="a" style="left:670px;top:412px;width:1px;height:74px;background:#a8a8ac"></div>
<div class="a" style="left:657px;top:436px;width:132px;height:1px;background:#c4c4c8"></div>
<div class="a" style="left:657px;top:460px;width:132px;height:1px;background:#c4c4c8"></div>
<div class="a" style="left:657px;top:485px;width:132px;height:1px;background:#c4c4c8"></div>
<!-- eyes -->
<svg class="a" style="left:657px;top:418px" width="12" height="64" viewBox="0 0 12 64">
<g id="eye"><rect x="1.5" y="1.5" width="9" height="10" fill="#ececf0" stroke="#c8c8cc" stroke-width=".8"/><path d="M2.5 6C4 3.5 8 3.5 9.5 6C8 8.5 4 8.5 2.5 6z" fill="#444"/><circle cx="6" cy="6" r="1.4" fill="#111"/></g>
<use href="#eye" y="25"/>
<use href="#eye" y="50"/>
</svg>
<!-- thumbs -->
<div class="a" style="left:671px;top:413px;width:22px;height:23px;background:#111"></div>
<div class="a" style="left:672px;top:414px;width:20px;height:21px;background:#e4ecf8"></div>
<div class="a" style="left:673px;top:415px;width:19px;height:20px;background:#878787;border-right:1px solid #111;border-bottom:1px solid #111"></div>
<div class="a" style="left:678px;top:413px;width:9px;height:1px;background:#6a90d0"></div>
<div class="a" style="left:678px;top:435px;width:9px;height:1px;background:#6a90d0"></div>
<div class="a" style="left:672px;top:438px;width:21px;height:21px;background:#000"></div>
<svg class="a" style="left:672px;top:438px" width="21" height="21"><path d="M2 2L20 18M2 12H20" stroke="#2a2a2a" stroke-width=".7"/></svg>
<div class="a" style="left:672px;top:463px;width:21px;height:21px;background:#fff;border:1px solid #222"></div>
<div class="t" style="left:695px;top:422px;font-size:7px;font-weight:bold;color:#fff">Layer 2</div>
<div class="s6" style="left:695px;top:446px;font-size:7px">Layer 1</div>
<div class="t" style="left:695px;top:470px;font-size:7px;font-style:italic;color:#111">Background</div>
<svg class="a" style="left:772px;top:469px" width="8" height="9"><rect x="1" y="4" width="6" height="4.5" fill="#d8d8d8" stroke="#555" stroke-width=".8"/><path d="M2.3 4V2.5C2.3 .8 5.7 .8 5.7 2.5V4" stroke="#555" fill="none" stroke-width=".9"/></svg>
<!-- footer -->
<div class="a" style="left:657px;top:599px;width:140px;height:1px;background:#b0b0b4"></div>
<svg class="a" style="left:672px;top:600px" width="118" height="10" viewBox="0 0 118 10">
<g stroke="#333" stroke-width=".9" fill="none">
<ellipse cx="4" cy="4.5" rx="3" ry="2" stroke="#777"/><ellipse cx="9" cy="4.5" rx="3" ry="2" stroke="#777"/>
<circle cx="25" cy="4.5" r="4" fill="#111" stroke="#111"/><path d="M22.5 7L27.5 2M23 3L27 6" stroke="#fff" stroke-width=".9"/>
<rect x="37.5" y="1.5" width="9" height="6" fill="#ccc" stroke="#555"/><circle cx="42" cy="4.5" r="2.2" fill="#fff" stroke="none"/>
<circle cx="59" cy="4.5" r="4" fill="#fff" stroke="#111"/><path d="M59 .5A4 4 0 0 0 59 8.5z" fill="#111"/>
<path d="M71.5 2.5H75L76 3.5H79.5V8H71.5z" fill="#fafafa" stroke="#111"/>
<rect x="89.5" y="1.5" width="7" height="7" fill="#eee" stroke="#222"/><path d="M96 2V9H89" stroke="#000" stroke-width="1.4"/>
<path d="M106.5 3H112.5L111.5 9H107.5z" fill="#eee" stroke="#111"/><path d="M106 2H113M108 1H111" stroke="#111" stroke-width="1"/>
</g>
<path d="M30 9h1.5v-1.5z" fill="#111"/><path d="M64 9h1.5v-1.5z" fill="#111"/>
</svg>
<div class="a" style="left:789px;top:600px;width:1px;height:9px;background:#d0d0d4"></div>

<!-- ============ MINIMIZED DOC ============ -->
<div class="a" style="left:0;top:596px;width:100px;height:21px;background:#5676b8;border-radius:5px 5px 0 0"></div>
<div class="a" style="left:1px;top:597px;width:98px;height:20px;background:linear-gradient(#86aaea 0px,#7298dc 2px,#6c90d6 9px,#7aa0e0 14px,#8ab2ec 20px);border-radius:4px 4px 0 0"></div>
<svg class="a" style="left:3px;top:601px" width="12" height="12" viewBox="0 0 12 12">
<path d="M2.8 1.3H9.8L10.8 2.3V11.2H2.8z" fill="#f8faf8" stroke="#1a2a4a" stroke-width=".7"/>
<path d="M4.2 4.8 L9.6 10.6" stroke="#2f9a48" stroke-width="1.8"/>
<path d="M2.5 4 L5.5 7.5" stroke="#7fd0f0" stroke-width="1.4"/>
<path d="M0 3.2 C1.5 1.8 4 1.6 6.8 2.4 L6.6 4 C4 3.8 2 4 0 3.6z" fill="#2a78d0"/>
</svg>
<div class="t" style="left:17px;top:603px;font-size:10px;font-weight:bold;color:#f4f8ff;letter-spacing:-0.2px">Unti</div>
<div class="t" style="left:37px;top:603px;font-size:10px;font-weight:bold;color:#f4f8ff;letter-spacing:1.2px">...</div>
<div class="xb" style="left:50px;top:600px;background:linear-gradient(#6a8ed2,#7aa0e0 55%,#8ab0ea);border-color:#4a68a8;box-shadow:inset 0 0 0 1px #9cbcf0"><div class="a" style="left:4px;top:1px;width:7px;height:6px;border:1px solid #fff;border-top-width:2px;border-left:0;border-bottom:0"></div><div class="a" style="left:1px;top:5px;width:7px;height:6px;border:1px solid #fff;border-top-width:2px"></div></div>
<div class="xb" style="left:66px;top:600px;background:linear-gradient(#6a8ed2,#7aa0e0 55%,#8ab0ea);border-color:#4a68a8;box-shadow:inset 0 0 0 1px #9cbcf0"><div class="a" style="left:2px;top:2px;width:8px;height:8px;border:1px solid #fff;border-top-width:2px"></div></div>
<div class="xb" style="left:82px;top:600px;background:linear-gradient(#6a8ed2,#7aa0e0 55%,#8ab0ea);border-color:#4a68a8;box-shadow:inset 0 0 0 1px #9cbcf0"><svg class="a" style="left:2px;top:2px" width="9" height="9"><path d="M1 1L8 8M8 1L1 8" stroke="#fff" stroke-width="1.3"/></svg></div>
<div class="a" style="left:0;top:617px;width:800px;height:1px;background:#4a4a4a"></div>

</body></html>
